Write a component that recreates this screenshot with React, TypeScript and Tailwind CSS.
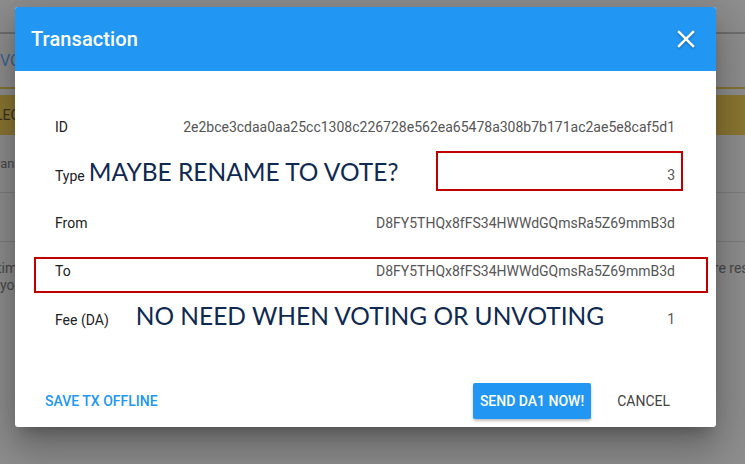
import { MdClose } from "react-icons/md";

const rows = [
  { label: "ID", value: "2e2bce3cdaa0aa25cc1308c226728e562ea65478a308b7b171ac2ae5e8caf5d1" },
  { label: "Type", value: "3", note: "MAYBE RENAME TO VOTE?" },
  { label: "From", value: "D8FY5THQx8fFS34HWWdGQmsRa5Z69mmB3d" },
  { label: "To", value: "D8FY5THQx8fFS34HWWdGQmsRa5Z69mmB3d" },
  { label: "Fee (DA)", value: "1", note: "NO NEED WHEN VOTING OR UNVOTING" },
];

function Backdrop() {
  return (
    <div className="flex flex-col text-[14px] text-[#4a4a4a]">
      <div className="h-[34px] border-b-2 border-[#6f6f6f]" />
      <div className="h-[53px] flex items-center text-[16px] text-[#3b6592]">VOTES</div>
      <div className="h-[2px] bg-[#857432]" />
      <div className="h-[6px]" />
      <div className="h-[40px] flex items-center bg-[#8c7834] text-[#3a3420] -ml-[5px]">LEGATES</div>
      <div className="h-[58px] flex items-center -ml-[4px] text-[13px] border-b border-[#7e7e7e]">rank</div>
      <div className="h-[49px] flex items-center pl-[36px] border-b border-[#7e7e7e]">2</div>
      <div className="flex justify-between pt-[18px] text-[14px] leading-[17px]">
        <div className="-ml-[3px]">
          <div>time</div>
          <div className="ml-[3px]">you</div>
        </div>
        <div className="-mr-[37px]">are resolved</div>
      </div>
    </div>
  );
}

export default function App() {
  return (
    <div className="relative w-[745px] h-[464px] overflow-hidden bg-[#8f8f8f] font-['Roboto',sans-serif]">
      <Backdrop />
      <div className="absolute inset-0 pl-[15px] pt-[7px]">
        <div className="relative w-[701px] bg-white rounded-[3px] overflow-hidden shadow-[0_11px_15px_-7px_rgba(0,0,0,0.25),0_24px_38px_3px_rgba(0,0,0,0.16),0_9px_46px_8px_rgba(0,0,0,0.14)]">
          <div className="h-[64px] bg-[#2196f3] flex items-center justify-between pl-4 pr-[15px]">
            <span className="text-white text-[20px] font-medium tracking-[0.1px]">Transaction</span>
            <MdClose className="text-white drop-shadow-[0_1px_1px_rgba(0,0,0,0.35)]" size={30} />
          </div>
          <div className="pt-8 pb-8 pl-10 pr-[41px]">
            {rows.map((r) => (
              <div key={r.label} className="h-12 flex items-center justify-between">
                <div className="flex items-baseline">
                  <span className="text-[14px] text-[#212121]">{r.label}</span>
                  {r.note && (
                    <span
                      className={`font-['Lato',sans-serif] text-[24.5px] text-[#0f2a52] leading-[16px] ${
                        r.label === "Type" ? "ml-[4px]" : "ml-[27px]"
                      }`}
                    >
                      {r.note}
                    </span>
                  )}
                </div>
                <span className="text-[14px] text-[#555555]">{r.value}</span>
              </div>
            ))}
          </div>
          <div className="flex items-center justify-between pl-[14px] pr-[30px] py-2">
            <button className="h-9 px-4 text-[14px] font-medium text-[#2196f3] uppercase">Save tx offline</button>
            <div className="flex items-center gap-[10px]">
              <button className="h-9 px-[7px] rounded-[2px] bg-[#2196f3] text-white text-[14px] font-medium uppercase shadow-[0_2px_3px_rgba(0,0,0,0.25)]">
                Send DA1 now!
              </button>
              <button className="h-9 px-4 text-[14px] text-[#424242] uppercase">Cancel</button>
            </div>
          </div>
          <div className="absolute left-[421px] top-[144px] w-[247px] h-[40px] border-2 border-[#c00000]" />
          <div className="absolute left-[19px] top-[250px] w-[674px] h-[36px] border-2 border-[#c00000]" />
        </div>
      </div>
    </div>
  );
}
